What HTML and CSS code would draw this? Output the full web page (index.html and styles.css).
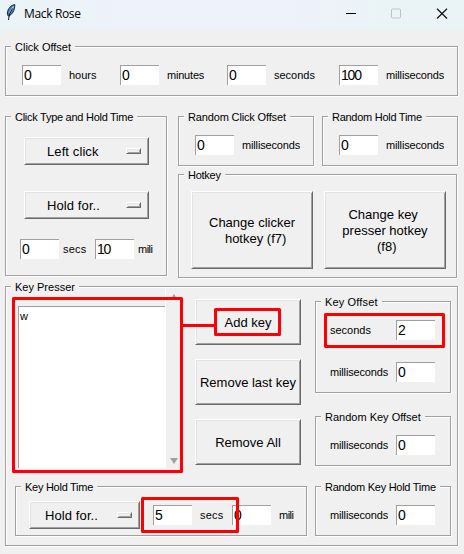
FILE: index.html
```html
<!DOCTYPE html>
<html lang="en">
<head>
<meta charset="utf-8">
<title>Mack Rose</title>
<link rel="stylesheet" href="styles.css">
</head>
<body>
<div class="window">
  <header class="titlebar">
    <svg class="feather" width="10" height="17" viewBox="0 0 10 17">
      <path d="M8.8 .6C5 1.2 2 4.300 1.300 9L2.200 12.200C6 11 8.900 6.500 8.800 .6Z" fill="#3f7fc4" stroke="#172638" stroke-width="1"/>
      <path d="M7.500 2.500L3.600 9" stroke="#b9dcf5" stroke-width="1.300"/>
      <path d="M6.500 4.500C4.500 8 3 11 2.500 16" fill="none" stroke="#101820" stroke-width="1"/>
    </svg>
    <span class="title">Mack Rose</span>
    <svg class="controls" width="102" height="12" viewBox="0 0 102 12">
      <path d="M0 5.500H10" stroke="#000"/>
      <rect x="45.500" y="1" width="9" height="9" rx="1" fill="none" stroke="#bfc3c6"/>
      <path d="M91 .8L101 10.500M101 .8L91 10.500" stroke="#111" stroke-width="1.200"/>
    </svg>
  </header>

  <main class="content">
    <section class="group click-offset">
      <h2 class="legend loose">Click Offset</h2>
      <div class="field hours"><span class="entry">0</span><span class="label l-hours">hours</span></div>
      <div class="field minutes"><span class="entry">0</span><span class="label l-minutes">minutes</span></div>
      <div class="field seconds"><span class="entry">0</span><span class="label">seconds</span></div>
      <div class="field"><span class="entry">100</span><span class="label l-ms">milliseconds</span></div>
    </section>

    <div class="middle">
      <section class="group click-type">
        <h2 class="legend">Click Type and Hold Time</h2>
        <div class="option">Left click<i class="indicator"></i></div>
        <div class="option">Hold for..<i class="indicator"></i></div>
        <div class="hold-row">
          <span class="entry">0</span><span class="label secs">secs</span>
          <span class="entry">10</span><span class="label l-mili">mili</span>
        </div>
      </section>
      <div class="middle-right">
        <div class="randoms">
          <section class="group small">
            <h2 class="legend medium">Random Click Offset</h2>
            <span class="entry">0</span><span class="label l-ms">milliseconds</span>
          </section>
          <section class="group small">
            <h2 class="legend">Random Hold Time</h2>
            <span class="entry">0</span><span class="label l-ms">milliseconds</span>
          </section>
        </div>
        <section class="group hotkey">
          <h2 class="legend">Hotkey</h2>
          <div class="button big"><span>Change clicker<br>&nbsp; hotkey (f7)</span></div>
          <div class="button big"><span>Change key&nbsp;<br>presser hotkey<br>&nbsp;(f8)</span></div>
        </section>
      </div>
    </div>

    <section class="group presser">
      <h2 class="legend loose">Key Presser</h2>
      <div class="presser-left">
        <div class="keys">
          <div class="listbox">w</div>
          <div class="scrollbar"><i class="up"></i><i class="down"></i></div>
          <div class="actions">
            <div class="button">Add key</div>
            <div class="button">Remove last key</div>
            <div class="button">Remove All</div>
          </div>
        </div>
        <section class="group key-hold">
          <h2 class="legend">Key Hold Time</h2>
          <div class="option narrow">Hold for..<i class="indicator"></i></div>
          <span class="entry">5</span><span class="label secs">secs</span>
          <span class="entry">0</span><span class="label l-mili">mili</span>
        </section>
      </div>
      <div class="presser-right">
        <section class="group key-offset">
          <h2 class="legend looser">Key Offset</h2>
          <div class="pair"><span class="label">seconds</span><span class="entry">2</span></div>
          <div class="pair"><span class="label l-ms">milliseconds</span><span class="entry">0</span></div>
        </section>
        <section class="group single">
          <h2 class="legend loose">Random Key Offset</h2>
          <div class="pair"><span class="label l-ms">milliseconds</span><span class="entry">0</span></div>
        </section>
        <section class="group single">
          <h2 class="legend">Random Key Hold Time</h2>
          <div class="pair"><span class="label l-ms">milliseconds</span><span class="entry">0</span></div>
        </section>
      </div>
    </section>
  </main>

  <svg class="highlights" width="464" height="554" viewBox="0 0 464 554">
    <rect x="13.500" y="298.500" width="168" height="173"/>
    <path d="M183 325.500H215"/>
    <rect x="215.500" y="309.500" width="64" height="25"/>
    <rect x="325.500" y="314.500" width="118" height="32"/>
    <rect x="142.500" y="498.500" width="95" height="33"/>
  </svg>
</div>
</body>
</html>
```

FILE: styles.css
```css
* { box-sizing: border-box; }

body {
  margin: 0;
  background: #f0f0f0;
  color: #000;
  font: 11px/13px "Liberation Sans", Arial, sans-serif;
}

.window {
  position: relative;
  width: 464px;
  height: 554px;
  overflow: hidden;
}

.titlebar {
  display: flex;
  height: 29px;
  padding-left: 6px;
  background: linear-gradient(90deg, #eaf4f6, #eef2fb 28%, #eef2fb 62%, #eaf4f6 85%);
}

.feather { margin-top: 4px; }

.title {
  width: 330px;
  padding: 5px 0 0 8px;
  font: 12px/17px "Open Sans", "Noto Sans", sans-serif;
  letter-spacing: -0.35px;
}

.controls { margin: 8px 0 0; }

.content { padding: 17px 0 0 5px; }

.group {
  position: relative;
  display: flex;
  border: 1px solid #a0a0a0;
  box-shadow: 1px 1px 0 #fff, inset 1px 1px 0 #fff;
}

.legend {
  position: absolute;
  top: -6px;
  left: 5px;
  height: 13px;
  margin: 0;
  padding: 0 4px;
  background: #f0f0f0;
  font-size: 11px;
  font-weight: normal;
  line-height: 13px;
  letter-spacing: -0.27px;
  white-space: nowrap;
}
.medium { letter-spacing: -0.15px; }
.loose { letter-spacing: 0; }
.looser { letter-spacing: 0.15px; }

.entry {
  flex: none;
  width: 39px;
  height: 20px;
  padding-left: 1px;
  border: solid #a0a0a0;
  border-width: 1px 0 0 1px;
  background: #fff;
  font-size: 14px;
  line-height: 19px;
  letter-spacing: -1.2px;
}

.label { line-height: 20px; white-space: nowrap; }
.l-ms { letter-spacing: -0.15px; }
.l-hours { letter-spacing: 0; }
.l-minutes { letter-spacing: -0.2px; }
.l-mili { letter-spacing: -0.5px; }

.click-offset {
  width: 453px;
  height: 50px;
  padding: 18px 0 0 16px;
}
.field { display: flex; gap: 8px; }
.hours { width: 98px; }
.minutes { width: 107px; }
.seconds { width: 112px; }

.middle {
  display: flex;
  gap: 11px;
  height: 162px;
  margin-top: 20px;
}

.click-type {
  flex-direction: column;
  width: 162px;
  height: 160px;
  padding: 20px 0 0 14px;
}

.option, .button {
  border: 1px solid;
  border-color: #fff #696969 #696969 #fff;
  box-shadow: inset 1px 1px 0 #e3e3e3, inset -1px -1px 0 #a0a0a0;
  font-size: 13px;
}

.option {
  display: flex;
  align-items: center;
  justify-content: space-between;
  flex: none;
  width: 125px;
  height: 28px;
  margin: 0 0 26px 4px;
  padding: 0 7px 0 22px;
  letter-spacing: 0.1px;
}

.indicator {
  width: 15px;
  height: 6px;
  border: 1px solid;
  border-color: #fff #696969 #696969 #fff;
  box-shadow: inset 1px 1px 0 #e3e3e3, inset -1px -1px 0 #a0a0a0;
}

.hold-row { display: flex; margin-top: -6px; }
.secs { width: 36px; padding-left: 4px; letter-spacing: 0.2px; }
.hold-row .l-mili { padding-left: 4px; }

.randoms { display: flex; gap: 8px; }
.small {
  gap: 8px;
  width: 136px;
  height: 50px;
  padding: 18px 0 0 16px;
}

.hotkey {
  gap: 11px;
  width: 279px;
  height: 104px;
  margin-top: 8px;
  padding: 16px 0 0 12px;
}

.button {
  display: flex;
  align-items: center;
  justify-content: center;
  width: 106px;
  height: 46px;
  padding-top: 2px;
  line-height: 16px;
  text-align: center;
  white-space: nowrap;
}
.big { width: 122px; height: 78px; letter-spacing: 0; }

.presser {
  gap: 8px;
  width: 453px;
  height: 260px;
  margin-top: 8px;
  padding-left: 9px;
}
.presser-left { width: 292px; }

.keys {
  display: flex;
  height: 199px;
  padding-left: 3px;
}
.listbox {
  width: 147px;
  height: 162px;
  margin-top: 19px;
  padding: 3px 0 0 1px;
  border: solid #a0a0a0;
  border-width: 1px 0 0 1px;
  background: #fff;
}
.scrollbar {
  display: flex;
  flex-direction: column;
  justify-content: space-between;
  align-items: center;
  width: 17px;
  height: 179px;
  margin-top: 2px;
  padding: 5px 0 4px;
  border-left: 1px solid #fff;
}
.up, .down {
  border: 4px solid transparent;
}
.up { border-width: 0 4px 6px; border-bottom-color: #a0a0a0; }
.down { border-width: 6px 4px 0; border-top-color: #a0a0a0; }

.actions {
  display: flex;
  flex-direction: column;
  gap: 14px;
  margin: 12px 0 0 13px;
}

.key-hold {
  width: 292px;
  height: 50px;
  padding: 18px 0 0 13px;
}
.key-hold .option {
  width: 111px;
  margin: -4px 13px 0 0;
  padding-left: 15px;
}
.key-hold .secs { width: 40px; padding-left: 8px; }
.key-hold .l-mili { padding-left: 8px; }

.presser-right { width: 136px; padding-top: 14px; }
.key-offset {
  flex-direction: column;
  gap: 22px;
  height: 92px;
  padding: 18px 0 0 14px;
}
.single {
  height: 50px;
  margin-top: 23px;
  padding: 18px 0 0 14px;
}
.single + .single { margin-top: 20px; }
.pair { display: flex; }
.pair .label { width: 66px; }

.highlights {
  position: absolute;
  inset: 0;
  fill: none;
  stroke: #f00;
  stroke-width: 3;
  stroke-linejoin: round;
}
```
